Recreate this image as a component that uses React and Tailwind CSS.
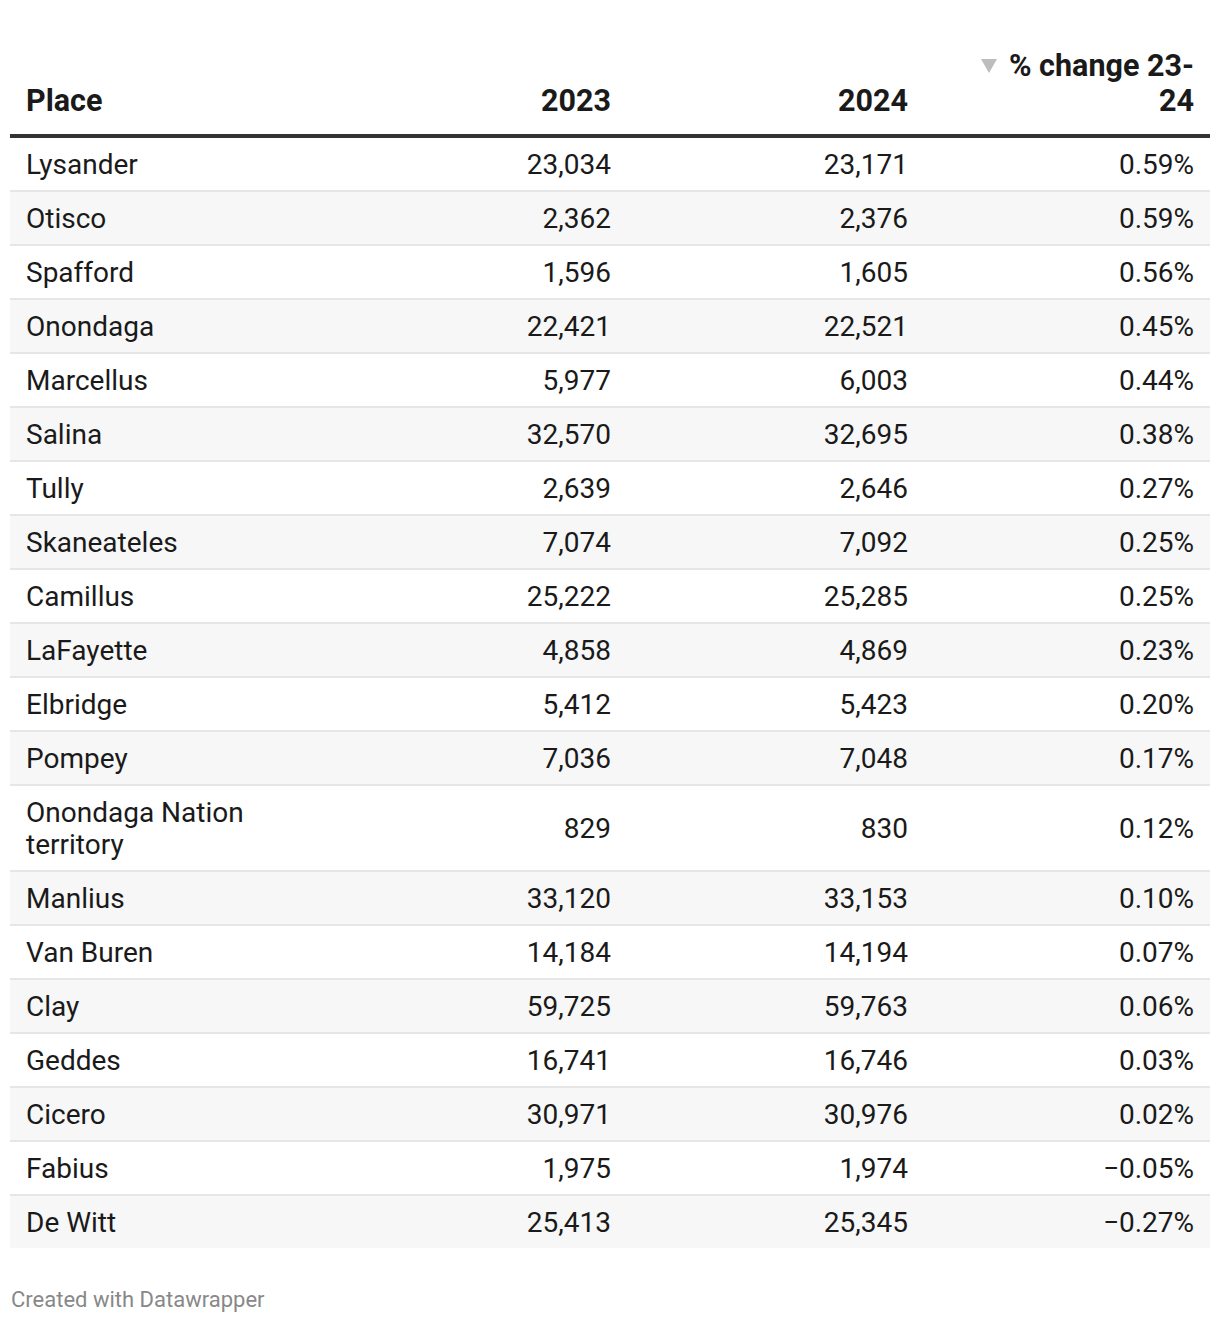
import React from "react";

const rows = [
  ["Lysander", "23,034", "23,171", "0.59%"],
  ["Otisco", "2,362", "2,376", "0.59%"],
  ["Spafford", "1,596", "1,605", "0.56%"],
  ["Onondaga", "22,421", "22,521", "0.45%"],
  ["Marcellus", "5,977", "6,003", "0.44%"],
  ["Salina", "32,570", "32,695", "0.38%"],
  ["Tully", "2,639", "2,646", "0.27%"],
  ["Skaneateles", "7,074", "7,092", "0.25%"],
  ["Camillus", "25,222", "25,285", "0.25%"],
  ["LaFayette", "4,858", "4,869", "0.23%"],
  ["Elbridge", "5,412", "5,423", "0.20%"],
  ["Pompey", "7,036", "7,048", "0.17%"],
  ["Onondaga Nation territory", "829", "830", "0.12%"],
  ["Manlius", "33,120", "33,153", "0.10%"],
  ["Van Buren", "14,184", "14,194", "0.07%"],
  ["Clay", "59,725", "59,763", "0.06%"],
  ["Geddes", "16,741", "16,746", "0.03%"],
  ["Cicero", "30,971", "30,976", "0.02%"],
  ["Fabius", "1,975", "1,974", "\u22120.05%"],
  ["De Witt", "25,413", "25,345", "\u22120.27%"],
];

export default function App() {
  return (
    <div
      className="w-[1220px] h-[1324px] bg-white text-[#1a1a1a] px-[10px]"
      style={{ fontFamily: "Roboto, 'Liberation Sans', sans-serif" }}
    >
      <div className="flex items-end h-[134px] border-b-[4px] border-[#333333] box-content font-bold text-[30.5px] leading-[35px]">
        <div className="w-[300px] pl-4 pb-[16px]">Place</div>
        <div className="w-[317px] pr-4 pb-[16px] text-right">2023</div>
        <div className="w-[297px] pr-4 pb-[16px] text-right">2024</div>
        <div className="w-[286px] pr-4 pb-[16px] text-right">
          <div className="flex items-center justify-end">
            <svg width="16" height="14" viewBox="0 0 16 14" className="mr-[12px]">
              <polygon points="0,0 16,0 8,14" fill="#bdbdbd" />
            </svg>
            <span>% change 23-</span>
          </div>
          <div>24</div>
        </div>
      </div>
      {rows.map((r, i) => (
        <div
          key={r[0]}
          className={
            "flex items-center text-[28px] leading-[32px] pt-[11px] pb-[9px] " +
            (i % 2 === 1 ? "bg-[#f7f7f7] " : "bg-white ") +
            (i === rows.length - 1 ? "" : "border-b-2 border-[#e6e6e6]")
          }
        >
          <div className="w-[300px] pl-4">
            {r[0] === "Onondaga Nation territory" ? (
              <>
                Onondaga Nation
                <br />
                territory
              </>
            ) : (
              r[0]
            )}
          </div>
          <div className="w-[317px] pr-4 text-right">{r[1]}</div>
          <div className="w-[297px] pr-4 text-right">{r[2]}</div>
          <div className="w-[286px] pr-4 text-right">{r[3]}</div>
        </div>
      ))}
      <div className="pt-[38px] pl-[1px] text-[22px] leading-[28px] text-[#888888]">
        Created with Datawrapper
      </div>
    </div>
  );
}
